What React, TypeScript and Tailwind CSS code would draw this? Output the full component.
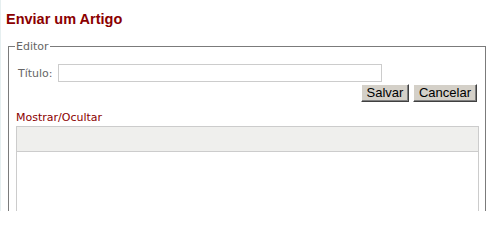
import React from "react";

export default function App() {
  return (
    <div className="w-[497px] h-[211px] overflow-hidden bg-white border-l border-[#e6eff0]">
      {/* Page title */}
      <h1 className="ml-[5px] pt-[11px] text-[14.5px] leading-[17px] font-bold text-[#8b0000] [font-family:'Liberation_Sans',Arial,sans-serif]">
        Enviar um Artigo
      </h1>

      {/* Editor fieldset */}
      <fieldset className="ml-[7px] mt-[12px] w-[478px] h-[200px] border border-[#7b7b7b] pl-[7px] pr-[6px] pt-[11px] [font-family:'DejaVu_Sans',Verdana,sans-serif] text-[11px]">
        <legend className="px-[1px] ml-[-1px] leading-[13px] text-[#666666]">Editor</legend>

        <div className="flex items-center">
          <label className="ml-[2px] leading-[13px] text-[#666666]">Título:</label>
          <input
            type="text"
            className="ml-[5px] h-[18px] w-[324px] border border-[#cccccc] bg-white outline-none"
          />
        </div>

        <div className="mt-[2px] mr-[2px] flex justify-end gap-[4px] [font-family:'Liberation_Sans',Arial,sans-serif]">
          <button className="h-[18px] w-[48px] bg-[#d4d0c8] text-[13px] leading-[14px] text-black border border-t-white border-l-white border-r-[#404040] border-b-[#404040] shadow-[inset_-1px_-1px_0_#808080]">
            Salvar
          </button>
          <button className="h-[18px] w-[64px] bg-[#d4d0c8] text-[13px] leading-[14px] text-black border border-t-white border-l-white border-r-[#404040] border-b-[#404040] shadow-[inset_-1px_-1px_0_#808080]">
            Cancelar
          </button>
        </div>

        <div className="mt-[9px] leading-[13px] text-[#8b0000]">Mostrar/Ocultar</div>

        {/* Rich text editor box */}
        <div className="mt-[2px] border border-[#cccccc]">
          <div className="h-[25px] bg-[#efefed] border-b border-[#cccccc]" />
          <div className="h-[80px] bg-white" />
        </div>
      </fieldset>
    </div>
  );
}
